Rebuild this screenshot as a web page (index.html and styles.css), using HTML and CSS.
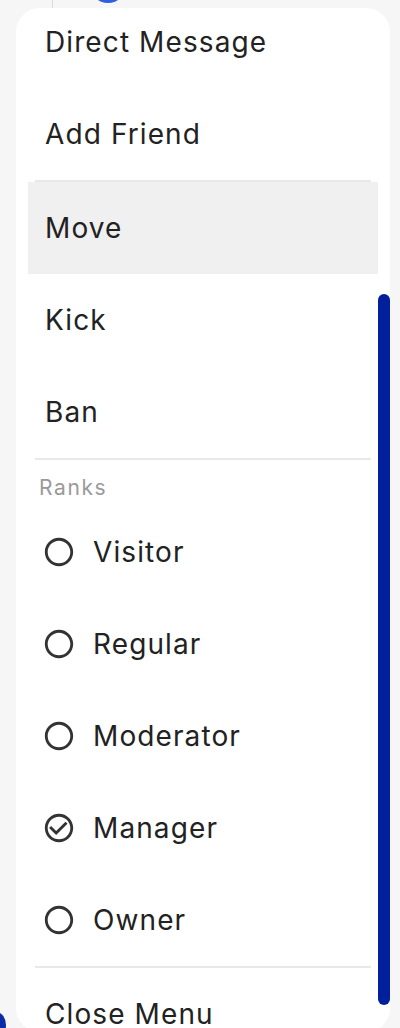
FILE: index.html
```html
<!DOCTYPE html>
<html lang="en">
<head>
<meta charset="utf-8">
<title>Member menu</title>
<link rel="stylesheet" href="styles.css">
</head>
<body>
<div class="backdrop">
  <div class="rail-line"></div>
  <div class="avatar-dot"></div>
  <div class="corner-dot"></div>
</div>
<div class="sheet">
  <ul class="menu">
    <li class="item">Direct Message</li>
    <li class="item">Add Friend</li>
    <li class="divider"></li>
    <li class="item active">Move</li>
    <li class="item">Kick</li>
    <li class="item">Ban</li>
    <li class="divider"></li>
    <li class="label">Ranks</li>
    <li class="item rank">
      <svg class="ico" viewBox="0 0 24 24"><path d="M12 2C6.48 2 2 6.48 2 12s4.48 10 10 10 10-4.480 10-10S17.52 2 12 2zm0 18c-4.42 0-8-3.58-8-8s3.58-8 8-8 8 3.58 8 8-3.58 8-8 8z"/></svg>
      <span>Visitor</span>
    </li>
    <li class="item rank">
      <svg class="ico" viewBox="0 0 24 24"><path d="M12 2C6.48 2 2 6.48 2 12s4.48 10 10 10 10-4.48 10-10S17.52 2 12 2zm0 18c-4.42 0-8-3.58-8-8s3.58-8 8-8 8 3.58 8 8-3.58 8-8 8z"/></svg>
      <span>Regular</span>
    </li>
    <li class="item rank">
      <svg class="ico" viewBox="0 0 24 24"><path d="M12 2C6.48 2 2 6.48 2 12s4.48 10 10 10 10-4.48 10-10S17.52 2 12 2zm0 18c-4.42 0-8-3.58-8-8s3.58-8 8-8 8 3.58 8 8-3.58 8-8 8z"/></svg>
      <span>Moderator</span>
    </li>
    <li class="item rank">
      <svg class="ico" viewBox="0 0 24 24"><path d="M16.59 7.58L10 14.17l-3.59-3.58L5 12l5 5 8-8zM12 2C6.48 2 2 6.480 2 12s4.48 10 10 10 10-4.48 10-10S17.52 2 12 2zm0 18c-4.42 0-8-3.58-8-8s3.58-8 8-8 8 3.58 8 8-3.58 8-8 8z"/></svg>
      <span>Manager</span>
    </li>
    <li class="item rank">
      <svg class="ico" viewBox="0 0 24 24"><path d="M12 2C6.48 2 2 6.48 2 12s4.48 10 10 10 10-4.48 10-10S17.52 2 12 2zm0 18c-4.42 0-8-3.58-8-8s3.58-8 8-8 8 3.58 8 8-3.58 8-8 8z"/></svg>
      <span>Owner</span>
    </li>
    <li class="divider"></li>
    <li class="item">Close Menu</li>
  </ul>
  <div class="scrollbar"></div>
</div>
</body>
</html>
```
FILE: styles.css
```css
html, body {
  margin: 0;
  padding: 0;
  height: 100%;
  overflow: hidden;
}
body {
  background: #f6f6f6;
  font-family: Inter, "Open Sans", "Liberation Sans", sans-serif;
  color: #222222;
  position: relative;
}
.backdrop {
  position: absolute;
  inset: 0;
  z-index: 0;
}
.rail-line {
  position: absolute;
  left: 52px;
  top: 0;
  width: 1px;
  height: 12px;
  background: #dcdcdc;
}
.avatar-dot {
  position: absolute;
  left: 90px;
  top: -33px;
  width: 36px;
  height: 36px;
  border-radius: 50%;
  background: #2f5fe0;
}
.corner-dot {
  position: absolute;
  left: -14px;
  top: 1012px;
  width: 20px;
  height: 26px;
  border-radius: 50%;
  background: #0b2aa8;
}
.sheet {
  position: relative;
  z-index: 1;
  margin: 8px 0 0 16px;
  width: 374px;
  height: 1024px;
  background: #ffffff;
  border-radius: 24px;
  overflow: hidden;
}
.menu {
  list-style: none;
  margin: -12px 0 0 0;
  padding: 0 12px;
  width: 350px;
}
.item {
  height: 92px;
  display: flex;
  align-items: center;
  padding-left: 17px;
  font-size: 28px;
  letter-spacing: 1.1px;
  box-sizing: border-box;
  white-space: nowrap;
}
.item.active {
  background: #f0f0f0;
}
.divider {
  height: 2px;
  margin: 0 7px;
  background: #e8e8e8;
}
.label {
  height: 46px;
  box-sizing: border-box;
  padding: 16px 0 0 11px;
  font-size: 21px;
  line-height: 24px;
  color: #9a9a9a;
  letter-spacing: 1.6px;
}
.rank {
  padding-left: 14px;
}
.ico {
  width: 34px;
  height: 34px;
  margin-right: 17px;
  fill: #333333;
  flex: none;
}
.scrollbar {
  position: absolute;
  right: 0;
  top: 286px;
  width: 12px;
  height: 711px;
  border-radius: 6px;
  background: #02209c;
}
```
